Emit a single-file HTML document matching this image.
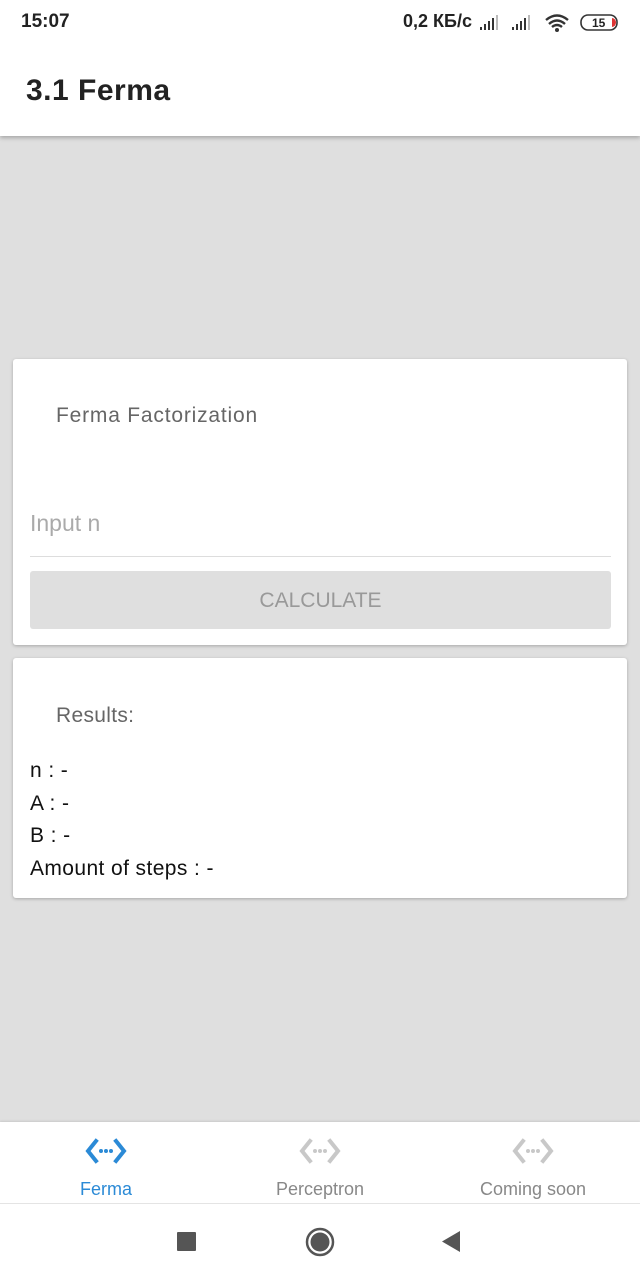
<!DOCTYPE html>
<html><head><meta charset="utf-8"><style>
body{margin:0;width:640px;height:1280px;position:relative;background:#dfdfdf;font-family:"Liberation Sans","Noto Sans CJK SC",sans-serif;overflow:hidden}
.abs{position:absolute}
.card{position:absolute;left:13px;width:614px;background:#fff;border-radius:3px;box-shadow:0 1px 3px rgba(0,0,0,.25)}
</style></head><body>
<div class="abs" style="left:0;top:0;width:640px;height:136px;background:#fff;box-shadow:0 2px 4px rgba(0,0,0,.25)"></div>
<div class="abs" style="left:21px;top:11px;font-size:19px;font-weight:bold;color:#222">15:07</div>
<div class="abs" style="left:403px;top:11px;font-size:18px;font-weight:bold;color:#222">0,2 КБ/с</div>
<svg class="abs" style="left:478px;top:12px" width="145" height="22">
<g fill="#333"><rect x="2" y="15" width="2" height="3"/><rect x="6" y="12" width="2" height="6"/><rect x="10" y="9" width="2" height="9"/><rect x="14" y="6" width="2" height="12"/><rect x="18" y="3" width="2" height="15" fill="#bbb"/>
<rect x="34" y="15" width="2" height="3"/><rect x="38" y="12" width="2" height="6"/><rect x="42" y="9" width="2" height="9"/><rect x="46" y="6" width="2" height="12"/><rect x="50" y="3" width="2" height="15" fill="#bbb"/></g>
<path d="M68 8 Q79 -1 90 8 M71 12 Q79 5 87 12 M74 15 Q79 11 84 15" stroke="#333" stroke-width="2.4" fill="none"/><circle cx="79" cy="18" r="2" fill="#333"/>
<rect x="103" y="3" width="36" height="15" rx="7" fill="none" stroke="#333" stroke-width="1.6"/>
<path d="M134 6 a4 4.5 0 0 1 0 9z" fill="#d33"/>
<text x="114" y="15" font-size="12" font-weight="bold" fill="#222" font-family="Liberation Sans">15</text>
</svg>
<div class="abs" style="left:26px;top:74px;font-size:30px;font-weight:bold;color:#222;letter-spacing:0.5px">3.1 Ferma</div>

<div class="card" style="top:359px;height:286px">
<div class="abs" style="left:43px;top:45px;font-size:21px;color:#666;letter-spacing:0.8px">Ferma Factorization</div>
<div class="abs" style="left:17px;top:151px;font-size:23px;color:#aaa">Input n</div>
<div class="abs" style="left:17px;top:197px;width:581px;height:1px;background:#ddd"></div>
<div class="abs" style="left:17px;top:212px;width:581px;height:58px;background:#dfdfdf;border-radius:3px;text-align:center;line-height:60px;font-size:21px;color:#999">CALCULATE</div>
</div>

<div class="card" style="top:658px;height:240px">
<div class="abs" style="left:43px;top:46px;font-size:21px;color:#666;letter-spacing:0.3px">Results:</div>
<div class="abs" style="left:17px;top:97px;font-size:21px;color:#111;line-height:32.5px;letter-spacing:0.4px">n : -<br>A : -<br>B : -<br>Amount of steps : -</div>
</div>

<div class="abs" style="left:0;top:1122px;width:640px;height:81px;background:#fff;box-shadow:0 -1px 2px rgba(0,0,0,.1)"></div>
<svg class="abs" style="left:0;top:1138px" width="640" height="28">
<g fill="none" stroke-width="4" stroke-linecap="square">
<path d="M96 3 L88 13 L96 23 M116 3 L124 13 L116 23" stroke="#2b8ad6"/>
<path d="M310 3 L302 13 L310 23 M330 3 L338 13 L330 23" stroke="#c8c8c8"/>
<path d="M523 3 L515 13 L523 23 M543 3 L551 13 L543 23" stroke="#c8c8c8"/></g>
<g fill="#2b8ad6"><circle cx="101" cy="13" r="2"/><circle cx="106" cy="13" r="2"/><circle cx="111" cy="13" r="2"/></g>
<g fill="#c8c8c8"><circle cx="315" cy="13" r="2"/><circle cx="320" cy="13" r="2"/><circle cx="325" cy="13" r="2"/><circle cx="528" cy="13" r="2"/><circle cx="533" cy="13" r="2"/><circle cx="538" cy="13" r="2"/></g>
</svg>
<div class="abs" style="left:56px;width:100px;top:1179px;text-align:center;font-size:18px;color:#2b8ad6">Ferma</div>
<div class="abs" style="left:240px;width:160px;top:1179px;text-align:center;font-size:18px;color:#888">Perceptron</div>
<div class="abs" style="left:453px;width:160px;top:1179px;text-align:center;font-size:18px;color:#888">Coming soon</div>
<div class="abs" style="left:0;top:1203px;width:640px;height:1px;background:#e4e4e4"></div>
<div class="abs" style="left:0;top:1204px;width:640px;height:76px;background:#fff"></div>
<svg class="abs" style="left:0;top:1220px" width="640" height="45">
<rect x="177" y="12" width="19" height="19" rx="1" fill="#555"/>
<circle cx="320" cy="22" r="13" fill="none" stroke="#555" stroke-width="2.5"/><circle cx="320" cy="22" r="9.5" fill="#555"/>
<path d="M460 11 L460 32 L442 21.5Z" fill="#555"/>
</svg>
</body></html>
